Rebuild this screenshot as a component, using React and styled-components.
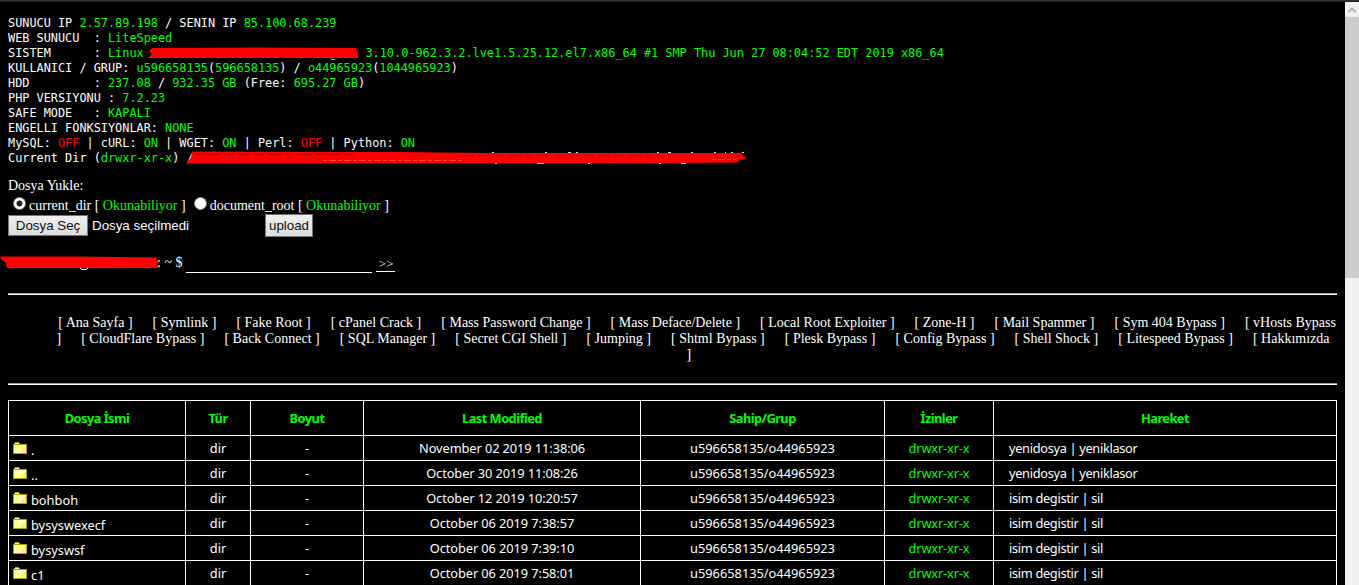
import styled, { createGlobalStyle } from "styled-components";

const GlobalStyle = createGlobalStyle`
  * { box-sizing: border-box; }
  html, body, #root { height: 100%; }
  body {
    margin: 0;
    background: #000;
    color: #fff;
    overflow: hidden;
    font-family: "Liberation Serif", "Times New Roman", serif;
    font-size: 14px;
  }
`;

const Page = styled.div`
  height: 585px;
  display: flex;
  flex-direction: column;
  overflow: hidden;
`;

const TopLine = styled.div`
  flex: none;
  height: 2px;
  background: #27333c;
  border-bottom: 1px solid #1a232a;
`;

const Window = styled.div`
  flex: 1;
  min-height: 0;
  display: flex;
`;

const Content = styled.main`
  flex: 1;
  min-width: 0;
  padding: 14px 8px 0;
  overflow: hidden;
`;

const ScrollBar = styled.div`
  flex: none;
  width: 14px;
  background: #f0f0f0;
`;

const ScrollUp = styled.div`
  height: 15px;
  display: flex;
  align-items: center;
  justify-content: center;
`;

const Thumb = styled.div`
  height: 261px;
  background: #cdcdcd;
`;

const Info = styled.pre`
  margin: 0;
  font-family: "DejaVu Sans Mono", monospace;
  font-size: 11.877px;
`;

const Line = styled.div`
  height: 15px;
  line-height: 15px;
  white-space: pre;
`;

const Green = styled.span`
  color: #00ff00;
`;

const Red = styled.span`
  color: #ff0000;
`;

const Scribble = styled.svg`
  display: inline-block;
  vertical-align: top;
  margin-left: ${({ $shift }) => $shift || 0}px;
  overflow: visible;
`;

const Upload = styled.form`
  margin: 11px 0 0;
`;

const UploadTitle = styled.div`
  height: 18px;
  line-height: 17px;
`;

const Choices = styled.div`
  display: flex;
  height: 19px;
  line-height: 21px;
  padding-left: 5px;
`;

const Choice = styled.label`
  display: flex;
  white-space: pre;
  margin-right: 8px;
`;

const Radio = styled.span`
  width: 13px;
  height: 13px;
  margin: 2px 3px 0 0;
  border-radius: 50%;
  border: 1px solid #8a8a8a;
  background: ${({ $on }) => ($on ? "radial-gradient(circle, #222 0 2.6px, #fff 3.4px)" : "#fff")};
`;

const FileRow = styled.div`
  display: flex;
  align-items: center;
  height: 23px;
  font-family: "Liberation Sans", Arial, sans-serif;
  font-size: 13.333px;
`;

const Button = styled.button`
  width: ${({ $w }) => $w}px;
  height: ${({ $h }) => $h}px;
  padding: 0;
  border: 1px solid #767676;
  background: linear-gradient(#efefef, #dcdcdc);
  color: #111;
  font: inherit;
  white-space: nowrap;
`;

const FileName = styled.span`
  width: 173px;
  margin-left: 4px;
`;

const Prompt = styled.div`
  display: flex;
  height: 20px;
  margin: 17px 0 19px -8px;
  line-height: 18px;
  white-space: pre;
`;

const Command = styled.div`
  width: 186px;
  height: 19px;
  margin-left: 4px;
  border-bottom: 1px solid #fff;
`;

const Submit = styled.div`
  width: 19px;
  height: 18px;
  margin-left: 4px;
  padding-left: 2px;
  line-height: 19px;
  font-size: 13.333px;
  border-bottom: 1px solid #fff;
`;

const Rule = styled.hr`
  margin: 0;
  height: 2px;
  border: 0;
  border-top: 1px solid #9a9a9a;
  background: #fff;
`;

const Menu = styled.ul`
  margin: 0;
  padding: 20px 0 20px 41px;
  list-style: none;
  height: 88px;
  line-height: 16px;
  text-align: center;
`;

const MenuItem = styled.li`
  display: inline;
  padding: 0 8.25px;
`;

const Files = styled.table`
  width: 1329px;
  margin-top: 15px;
  table-layout: fixed;
  border-collapse: collapse;
  font-family: "Noto Sans", sans-serif;
  font-size: 12.8px;
`;

const Head = styled.th`
  height: 35px;
  padding: 0;
  border: 1px solid #fff;
  color: #00ff00;
  letter-spacing: -0.52px;
`;

const Cell = styled.td`
  height: 25px;
  padding: 0 0 0 ${({ $left }) => $left || 0}px;
  border: 1px solid #fff;
  line-height: 20px;
  text-align: ${({ $left }) => ($left ? "left" : "center")};
  color: ${({ $green }) => ($green ? "#00ff00" : "#fff")};
  letter-spacing: ${({ $ls }) => $ls || 0}px;
`;

const Name = styled.div`
  display: flex;
  gap: 4px;
  height: 20px;
  line-height: 24px;
`;

const FolderIcon = styled.svg`
  flex: none;
  margin-top: 4px;
`;

const columns = [
  ["Dosya İsmi", 177],
  ["Tür", 65],
  ["Boyut", 113],
  ["Last Modified", 277],
  ["Sahip/Grup", 244],
  ["İzinler", 109],
  ["Hareket", 343],
];

const files = [
  [".", "November 02 2019 11:38:06", "yenidosya | yeniklasor"],
  ["..", "October 30 2019 11:08:26", "yenidosya | yeniklasor"],
  ["bohboh", "October 12 2019 10:20:57", "isim degistir | sil"],
  ["bysyswexecf", "October 06 2019 7:38:57", "isim degistir | sil"],
  ["bysyswsf", "October 06 2019 7:39:10", "isim degistir | sil"],
  ["c1", "October 06 2019 7:58:01", "isim degistir | sil"],
];

const menu = [
  "Ana Sayfa", "Symlink", "Fake Root", "cPanel Crack", "Mass Password Change",
  "Mass Deface/Delete", "Local Root Exploiter", "Zone-H", "Mail Spammer",
  "Sym 404 Bypass", "vHosts Bypass", "CloudFlare Bypass", "Back Connect",
  "SQL Manager", "Secret CGI Shell", "Jumping", "Shtml Bypass", "Plesk Bypass",
  "Config Bypass", "Shell Shock", "Litespeed Bypass", "Hakkımızda",
];

function Folder() {
  return (
    <FolderIcon width="14" height="12" viewBox="0 0 14 12" shapeRendering="crispEdges">
      <path d="M0 2h1v-1h1v-1h4v1h1v1h7v10H0z" fill="#a5a500" />
      <path d="M1 3h12v8H1zM2 1h4v1H2z" fill="#ffff9c" />
      <path d="M1 3h12v1H1z" fill="#ffffce" />
      <path d="M12 5h1v1h-1zM11 6h1v1h-1zM10 7h1v1h-1zM12 7h1v1h-1zM9 8h1v1H9zM11 8h1v1h-1zM8 9h1v1H8zM10 9h1v1h-1zM12 9h1v1h-1zM7 10h1v1H7zM9 10h1v1H9zM11 10h1v1h-1z" fill="#ffce9c" />
    </FolderIcon>
  );
}

export default function App() {
  return (
    <Page>
      <GlobalStyle />
      <TopLine />
      <Window>
        <Content>
          <Info>
            <Line>SUNUCU IP <Green>2.57.89.198</Green> / SENIN IP <Green>85.100.68.239</Green></Line>
            <Line>WEB SUNUCU  : <Green>LiteSpeed</Green></Line>
            <Line>
              {"SISTEM      : "}
              <Green>
                {"Linux "}
                <Scribble width="210.5" height="15" $shift={-3}>
                  <path d="M4 2L108 1.5L208 2L208 4L211 6L209 8L211 12L0 12L4 8L1 5z" fill="#f00" />
                  <path d="M182 12.5l2 1h3l1-1" fill="none" stroke="#0f0" />
                </Scribble>
                {" 3.10.0-962.3.2.lve1.5.25.12.el7.x86_64 #1 SMP Thu Jun 27 08:04:52 EDT 2019 x86_64"}
              </Green>
            </Line>
            <Line>KULLANICI / GRUP: <Green>u596658135</Green>(<Green>596658135</Green>) / <Green>o44965923</Green>(<Green>1044965923</Green>)</Line>
            <Line>{"HDD         : "}<Green>237.08</Green> / <Green>932.35 GB</Green> (Free: <Green>695.27 GB</Green>)</Line>
            <Line>PHP VERSIYONU : <Green>7.2.23</Green></Line>
            <Line>{"SAFE MODE   : "}<Green>KAPALI</Green></Line>
            <Line>ENGELLI FONKSIYONLAR: <Green>NONE</Green></Line>
            <Line>MySQL: <Red>OFF</Red> | cURL: <Green>ON</Green> | WGET: <Green>ON</Green> | Perl: <Red>OFF</Red> | Python: <Green>ON</Green></Line>
            <Line>
              Current Dir (<Green>drwxr-xr-x</Green>) /
              <Scribble width="560" height="15" $shift={-7}>
                <path
                  d="M305 1.5h2M358 1.5h2M381 1.5h3M389 1.5h2M470 1.5h2M481 1.5h3M504 1.5h2M527 1.5h2M538 1.5h1M544 1.5h2M555 1.5h2M308 12.5h2M350 12.5h7M401 12.5h2M472 12.5h2M494 12.5h5"
                  fill="none"
                  stroke="#ddd"
                />
                <path d="M5 0.5L210 1L300 2L555 2L556 5L559 6L558 8L552 8.500L551 11.500L480 12L0 12.5L0 11L4 7z" fill="#f00" />
                <path d="M8 3.500h160M278 4.500h200" fill="none" stroke="#b80000" strokeDasharray="9 3 14 4" />
                <path d="M136 9.500h140M525 8.500h24" fill="none" stroke="#f44" strokeDasharray="4 2 7 2" />
              </Scribble>
            </Line>
          </Info>

          <Upload>
            <UploadTitle>Dosya Yukle:</UploadTitle>
            <Choices>
              <Choice><Radio $on />current_dir [ <Green>Okunabiliyor</Green> ]</Choice>
              <Choice><Radio />document_root [ <Green>Okunabiliyor</Green> ]</Choice>
            </Choices>
            <FileRow>
              <Button type="button" $w={80} $h={21}>Dosya Seç</Button>
              <FileName>Dosya seçilmedi</FileName>
              <Button type="button" $w={48} $h={23}>upload</Button>
            </FileRow>
          </Upload>

          <Prompt>
            <Scribble width="157" height="18">
              <path d="M0 2.500L78 2.5L157 3.5L156 6L159 8L157 11L159 14L7 14L6 9L2 6z" fill="#f00" />
              <path d="M80 14l2 1.5h4l2-1.5" fill="none" stroke="#fff" />
            </Scribble>
            : ~ $
            <Command />
            <Submit>&gt;&gt;</Submit>
          </Prompt>

          <Rule />
          <Menu>
            {menu.map((item) => [<MenuItem key={item}>[ {item} ]</MenuItem>, " "])}
          </Menu>
          <Rule />

          <Files>
            <colgroup>
              {columns.map(([title, width]) => <col key={title} width={width} />)}
            </colgroup>
            <thead>
              <tr>{columns.map(([title]) => <Head key={title}>{title}</Head>)}</tr>
            </thead>
            <tbody>
              {files.map(([name, date, actions]) => (
                <tr key={name}>
                  <Cell $left={4}><Name><Folder />{name}</Name></Cell>
                  <Cell>dir</Cell>
                  <Cell>-</Cell>
                  <Cell $ls={-0.08}>{date}</Cell>
                  <Cell>u596658135/o44965923</Cell>
                  <Cell $green $ls={-0.15}>drwxr-xr-x</Cell>
                  <Cell $left={15} $ls={-0.32}>{actions}</Cell>
                </tr>
              ))}
            </tbody>
          </Files>
        </Content>
        <ScrollBar>
          <ScrollUp>
            <svg width="8" height="6" viewBox="0 0 8 6">
              <path d="M0.5 5L4 1.5L7.5 5" fill="none" stroke="#b5b5b5" strokeWidth="2" />
            </svg>
          </ScrollUp>
          <Thumb />
        </ScrollBar>
      </Window>
    </Page>
  );
}
